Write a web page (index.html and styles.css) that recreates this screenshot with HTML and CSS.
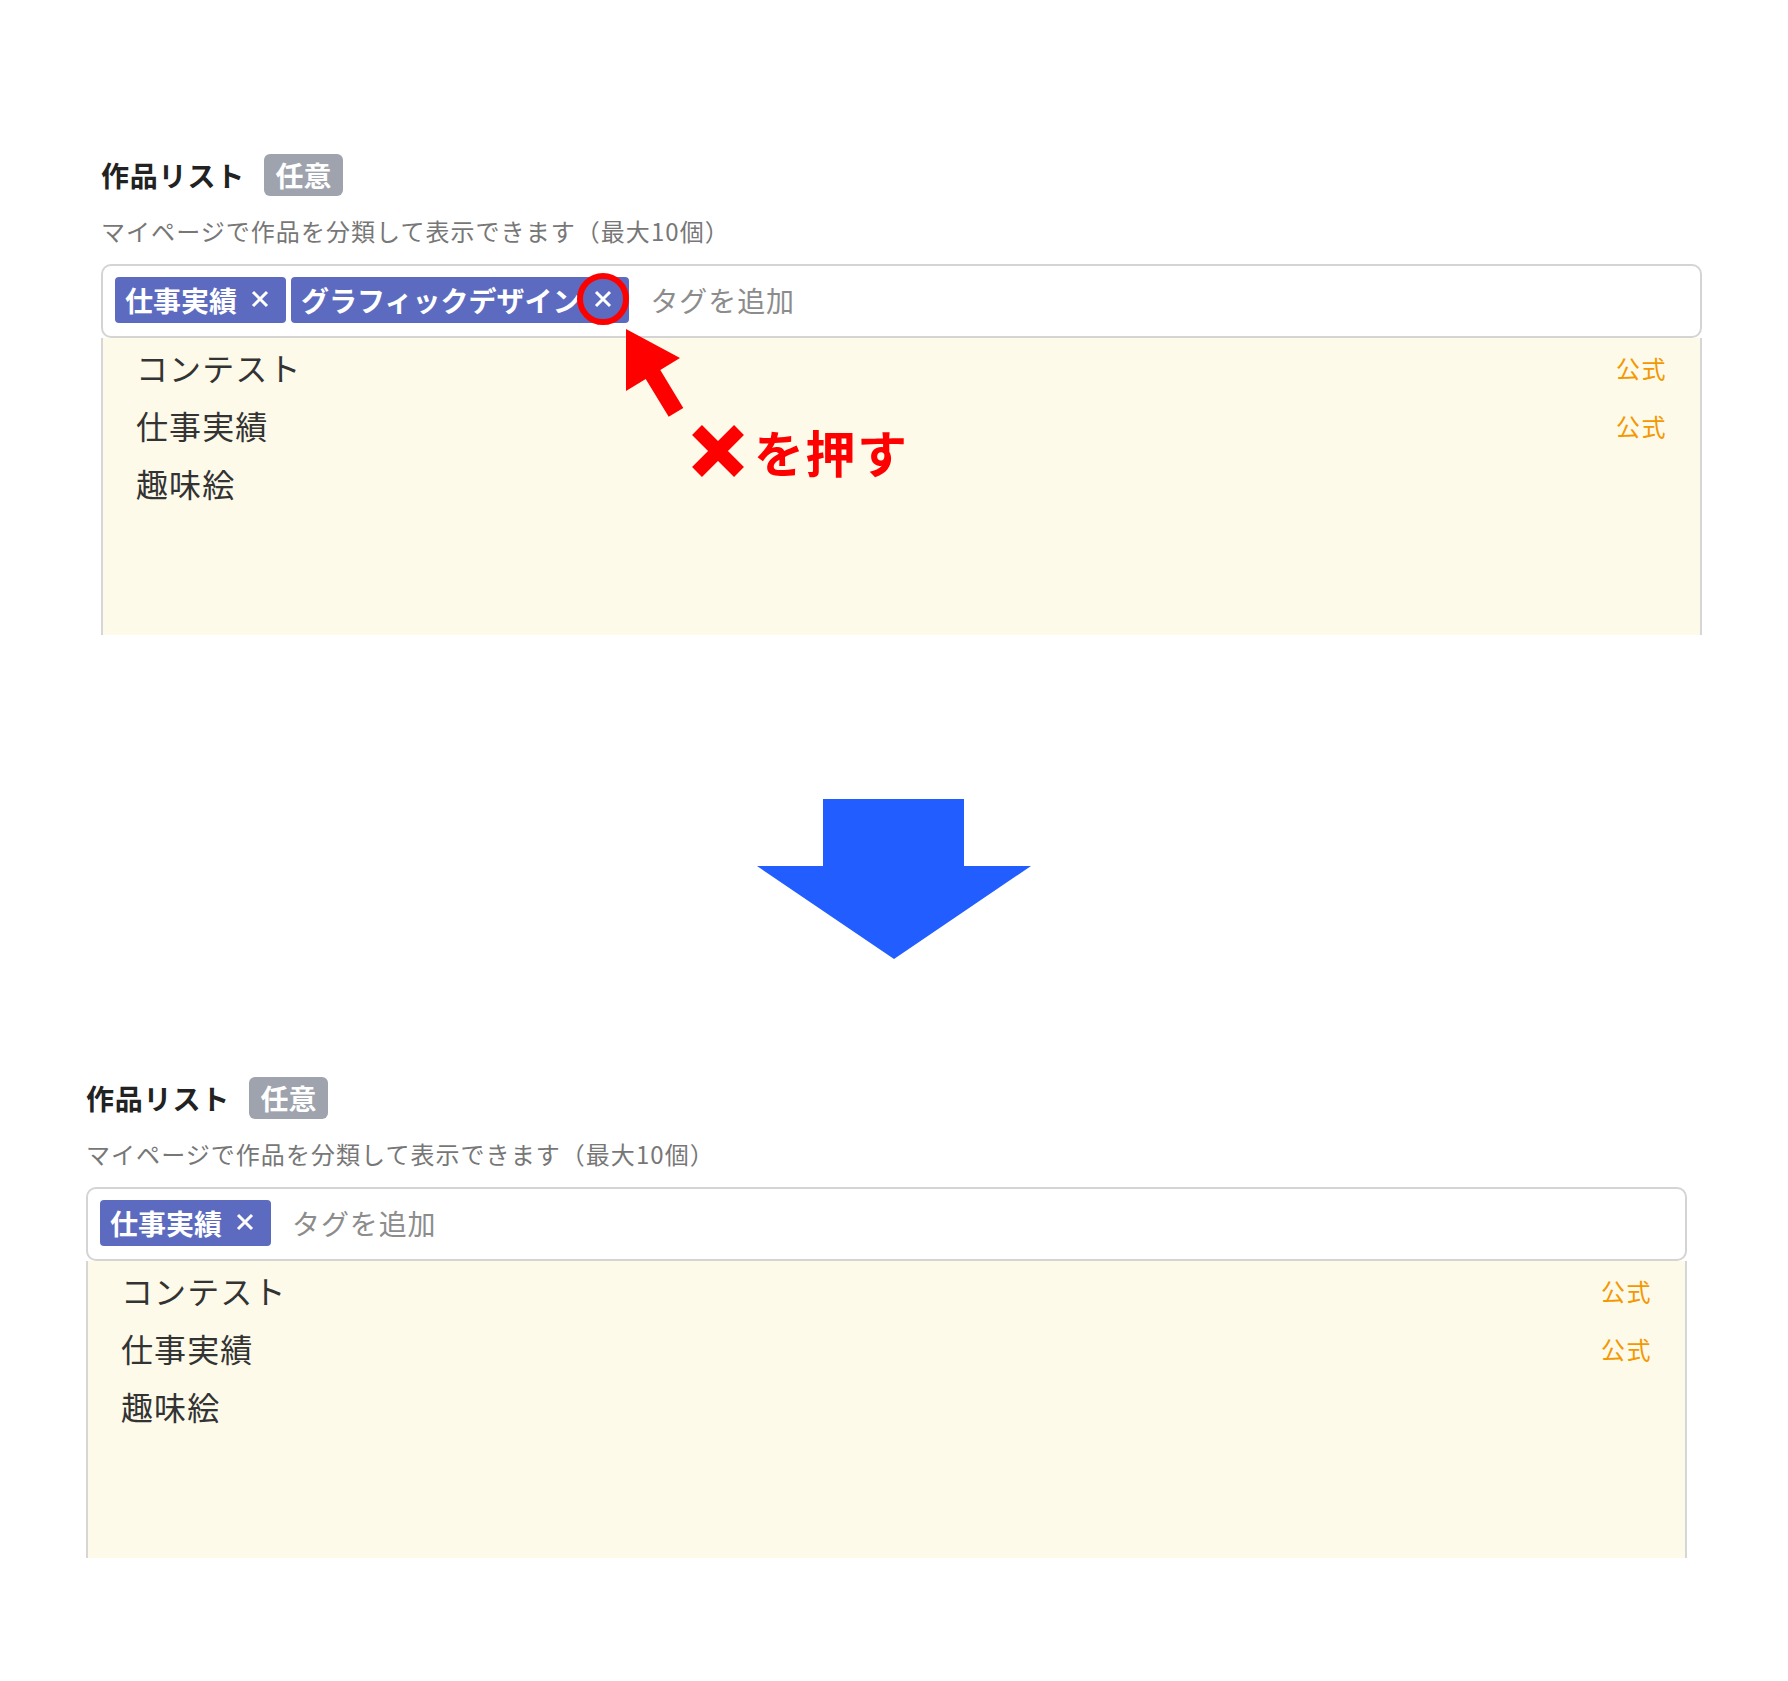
FILE: index.html
```html
<!DOCTYPE html>
<html lang="ja">
<head>
<meta charset="UTF-8">
<meta name="viewport" content="width=device-width, initial-scale=1.0">
<title>作品リスト</title>
<link rel="stylesheet" href="styles.css">
</head>
<body>
<div class="panel first">
    <div class="field-head">
        <span class="field-title">作品リスト</span>
        <span class="badge">任意</span>
    </div>
    <div class="field-note">マイページで作品を分類して表示できます（最大10個）</div>
    <div class="tag-input">
        <span class="tag">仕事実績<span class="tag-x"><svg width="18" height="18" viewBox="0 0 18 18"><path d="M2 2L16 16M16 2L2 16" stroke="#fff" stroke-width="3" fill="none"/></svg></span></span>
        <span class="tag">グラフィックデザイン<span class="tag-x marked"><svg width="18" height="18" viewBox="0 0 18 18"><path d="M2 2L16 16M16 2L2 16" stroke="#fff" stroke-width="3" fill="none"/></svg></span></span>
        <span class="placeholder">タグを追加</span>
    </div>
    <div class="suggest">
        <div class="suggest-item"><span>コンテスト</span><span class="official">公式</span></div>
        <div class="suggest-item"><span>仕事実績</span><span class="official">公式</span></div>
        <div class="suggest-item"><span>趣味絵</span></div>
    </div>

    <!-- annotation: press the x -->
    <svg class="pointer" width="75" height="105" viewBox="0 0 75 105">
        <polygon points="6,9 60,38 40.3,50.1 63.3,88 48.7,96.8 25.7,58.9 6,71" fill="#ff0000"/>
    </svg>
    <div class="callout">
        <svg class="callout-x" width="52" height="52" viewBox="0 0 52 52"><path d="M5 5L47 47M47 5L5 47" stroke="#ff0000" stroke-width="14" fill="none"/></svg>
        <span>を押す</span>
    </div>
</div>

<svg class="arrow-down" width="274" height="160" viewBox="0 0 274 160">
    <polygon points="66,0 207,0 207,67 274,67 137,160 0,67 66,67" fill="#225eff"/>
</svg>

<div class="panel second">
    <div class="field-head">
        <span class="field-title">作品リスト</span>
        <span class="badge">任意</span>
    </div>
    <div class="field-note">マイページで作品を分類して表示できます（最大10個）</div>
    <div class="tag-input">
        <span class="tag">仕事実績<span class="tag-x"><svg width="18" height="18" viewBox="0 0 18 18"><path d="M2 2L16 16M16 2L2 16" stroke="#fff" stroke-width="3" fill="none"/></svg></span></span>
        <span class="placeholder">タグを追加</span>
    </div>
    <div class="suggest">
        <div class="suggest-item"><span>コンテスト</span><span class="official">公式</span></div>
        <div class="suggest-item"><span>仕事実績</span><span class="official">公式</span></div>
        <div class="suggest-item"><span>趣味絵</span></div>
    </div>
</div>
</body>
</html>
```

FILE: styles.css
```css
body, html {
    margin: 0;
    background-color: #fff;
    font-family: "Noto Sans CJK JP", "Noto Sans", sans-serif;
    color: #333;
}

.panel {
    position: relative;
    width: 1601px;
}

.panel.first {
    margin-left: 101px;
    padding-top: 154px;
}

.panel.second {
    margin-left: 86px;
    margin-top: 118px;
}

.field-head {
    display: flex;
    align-items: center;
    height: 42px;
}

.field-title {
    font-size: 28px;
    font-weight: bold;
    letter-spacing: 0.8px;
    color: #222;
}

.badge {
    margin-left: 19px;
    padding: 0 11.5px;
    height: 42px;
    line-height: 42px;
    border-radius: 6px;
    background-color: #9ea3ad;
    color: #fff;
    font-size: 28px;
    font-weight: bold;
}

.field-note {
    margin-top: 18px;
    font-size: 24px;
    line-height: 34px;
    letter-spacing: 1.05px;
    color: #777;
}

.tag-input {
    margin-top: 16px;
    display: flex;
    align-items: center;
    gap: 5px;
    padding: 11px 12px 13px;
    border: 2px solid #d4d4d4;
    border-radius: 10px;
}

.tag {
    display: inline-flex;
    align-items: center;
    height: 46px;
    padding: 0 17px 0 10px;
    border-radius: 4px;
    background-color: #5c6bc0;
    color: #fff;
    font-size: 28px;
    font-weight: bold;
    line-height: 46px;
}

.tag-x {
    position: relative;
    display: block;
    width: 18px;
    height: 18px;
    margin-left: 14px;
    margin-bottom: 3px;
}

.tag-x svg {
    display: block;
}

/* red ring drawn over the delete button */
.tag-x.marked::after {
    content: "";
    position: absolute;
    left: 50%;
    top: 50%;
    width: 52px;
    height: 52px;
    box-sizing: border-box;
    border: 6px solid #ff0000;
    border-radius: 50%;
    transform: translate(-50%, -50%);
}

.placeholder {
    margin-left: 16px;
    font-size: 28px;
    letter-spacing: 0.9px;
    color: #8c8c8c;
}

.suggest {
    height: 297px;
    background-color: #fdfaea;
    border-left: 2px solid #d6d6d6;
    border-right: 2px solid #d6d6d6;
}

.suggest-item {
    display: flex;
    justify-content: space-between;
    align-items: center;
    height: 58px;
    padding: 0 33px 0 33px;
    font-size: 32px;
    letter-spacing: 1.1px;
    color: #333;
}

.official {
    font-size: 24px;
    letter-spacing: 1.5px;
    color: #f39800;
}

.pointer {
    position: absolute;
    left: 519px;
    top: 320px;
}

.callout {
    position: absolute;
    left: 591px;
    top: 425px;
    display: flex;
    align-items: center;
    gap: 10px;
    color: #ff0000;
    font-size: 50px;
    font-weight: bold;
    letter-spacing: 1.5px;
    line-height: 52px;
    white-space: nowrap;
}

.callout-x {
    display: block;
}

.arrow-down {
    display: block;
    margin: 164px auto 0;
}
```
